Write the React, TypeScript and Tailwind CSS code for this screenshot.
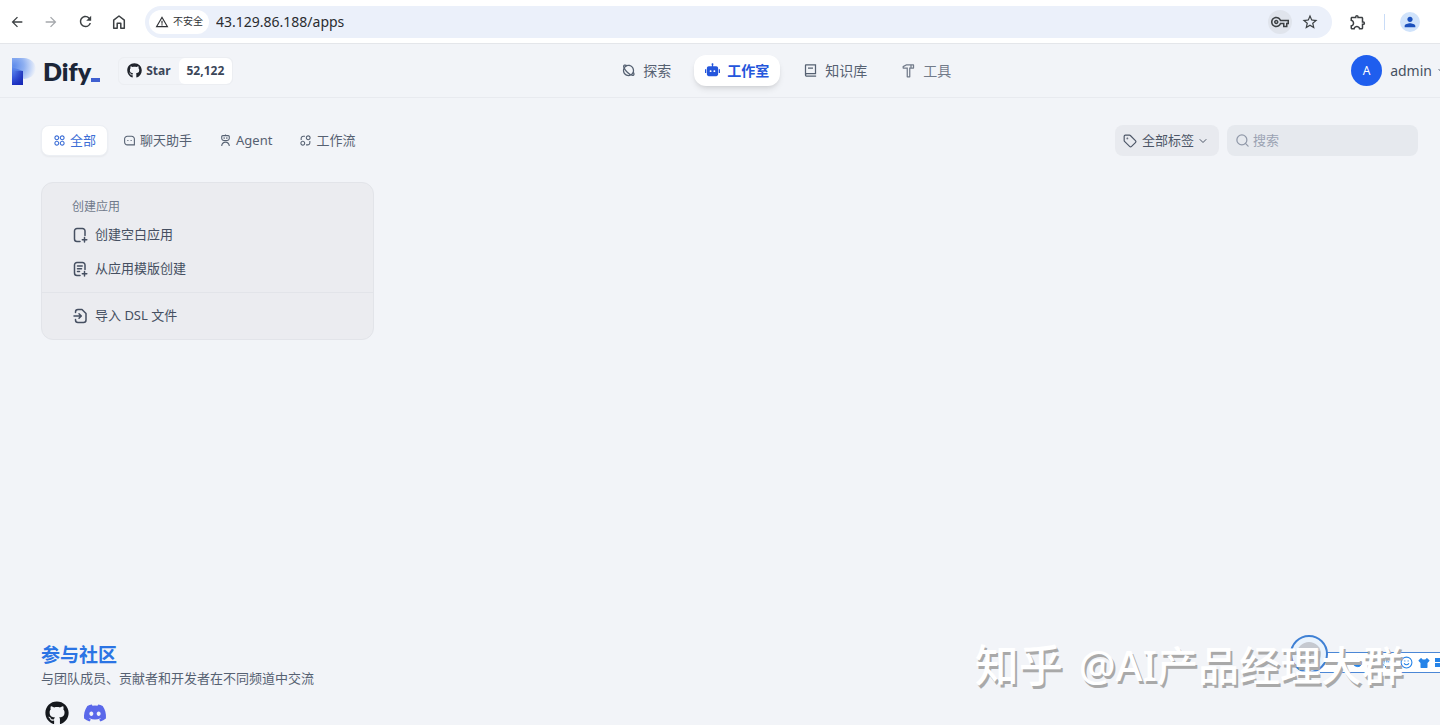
import { useState } from "react";
import type { ReactNode } from "react";
import {
  RiPlanetLine,
  RiRobot2Fill,
  RiBook2Line,
  RiHammerLine,
  RiApps2Line,
  RiMessage3Line,
  RiRobot3Line,
  RiExchange2Line,
  RiTShirtFill,
} from "react-icons/ri";
import {
  MdArrowBack,
  MdArrowForward,
  MdRefresh,
  MdWarningAmber,
  MdOutlineVpnKey,
  MdStarBorder,
  MdOutlineExtension,
  MdPerson,
} from "react-icons/md";
import { FaDiscord, FaGithub } from "react-icons/fa";
import { ChevronDown, Mic, Moon, Search, Smile, Tag } from "lucide-react";

const navItems = [
  { id: "explore", label: "探索", icon: RiPlanetLine, tone: "text-[#566172]" },
  { id: "studio", label: "工作室", icon: RiRobot2Fill, tone: "text-[#566172]" },
  { id: "datasets", label: "知识库", icon: RiBook2Line, tone: "text-[#566172]" },
  { id: "tools", label: "工具", icon: RiHammerLine, tone: "text-[#727b8a]" },
];

const tabs = [
  { id: "all", label: "全部", icon: RiApps2Line },
  { id: "chat", label: "聊天助手", icon: RiMessage3Line },
  { id: "agent", label: "Agent", icon: RiRobot3Line },
  { id: "workflow", label: "工作流", icon: RiExchange2Line },
];

function CardIcon({ children }: { children: ReactNode }) {
  return (
    <svg
      viewBox="0 0 16 16"
      className="size-4 shrink-0"
      fill="none"
      stroke="currentColor"
      strokeWidth="1.5"
      strokeLinecap="round"
      strokeLinejoin="round"
      aria-hidden="true"
    >
      {children}
    </svg>
  );
}

function HomeIcon() {
  return (
    <svg viewBox="0 0 16 16" className="size-4" fill="none" stroke="currentColor" strokeWidth="1.5" aria-hidden="true">
      <path d="M2.7 6.2 8 2l5.3 4.2v8H9.800V9.300H6.200v4.900H2.700z" strokeLinejoin="round" />
    </svg>
  );
}

function DifyLogo() {
  return (
    <a href="#apps" className="flex h-8 items-center gap-[7px]" aria-label="Dify">
      <svg viewBox="0 0 24 28" className="h-7 w-6" aria-hidden="true">
        <defs>
          <radialGradient id="bowl" gradientUnits="userSpaceOnUse" cx="2" cy="9" r="22">
            <stop offset="0" stopColor="#5f8ceb" />
            <stop offset="0.45" stopColor="#8fb0f1" />
            <stop offset="0.75" stopColor="#c2d4f7" />
            <stop offset="1" stopColor="#f0f3f9" />
          </radialGradient>
          <linearGradient id="stem" x1="0" y1="0" x2="0" y2="1">
            <stop offset="0" stopColor="#5f8ceb" />
            <stop offset="0.5" stopColor="#3f62df" />
            <stop offset="1" stopColor="#1c30c2" />
          </linearGradient>
          <linearGradient id="stemShade" x1="0" y1="0" x2="1" y2="0">
            <stop offset="0" stopColor="#1422ae" stopOpacity="0" />
            <stop offset="1" stopColor="#1422ae" stopOpacity="0.7" />
          </linearGradient>
        </defs>
        <path d="M0 1h12a12 12 0 0 1 12 12 12 12 0 0 1-12 9L0 14z" fill="url(#bowl)" />
        <path d="M0 10l11 4v14H0z" fill="url(#stem)" />
        <path d="M2 14h9v14H2z" fill="url(#stemShade)" />
      </svg>
      <span className="flex items-end">
        <span className="font-['Lato','Noto_Sans',sans-serif] text-[25px] leading-8 font-extrabold text-[#1c2638]">
          Dify
        </span>
        <span className="mb-[5px] h-1 w-[9px] bg-[#3f5fd0]" />
      </span>
    </a>
  );
}

function BrowserBar() {
  const navButton = "flex h-8 w-[34px] items-center justify-center";

  return (
    <div className="flex h-11 shrink-0 items-center border-b border-[#e4e6ea] bg-white text-[#3c4043]">
      <button className={navButton} aria-label="Back">
        <MdArrowBack className="size-4" />
      </button>
      <button className={`${navButton} text-[#a5a8ac]`} aria-label="Forward">
        <MdArrowForward className="size-4" />
      </button>
      <button className={navButton} aria-label="Reload">
        <MdRefresh className="size-[17px]" />
      </button>
      <button className={navButton} aria-label="Home">
        <HomeIcon />
      </button>
      <div className="ml-[9px] flex h-8 flex-1 items-center rounded-full bg-[#ebf0fa] px-1">
        <button className="flex h-6 shrink-0 items-center gap-1 rounded-full bg-white px-1.5 text-[10px] text-[#303236]">
          <MdWarningAmber className="size-[14px]" />
          不安全
        </button>
        <input
          aria-label="Address"
          defaultValue="43.129.86.188/apps"
          className="ml-[7px] min-w-0 flex-1 bg-transparent text-[14px] text-[#2a2c30] outline-none"
        />
        <button className="flex size-6 items-center justify-center rounded-full bg-[#e0e4ec]" aria-label="Passwords">
          <MdOutlineVpnKey className="size-[18px]" />
        </button>
        <button className="mx-1.5 flex size-6 items-center justify-center" aria-label="Bookmark">
          <MdStarBorder className="size-[18px]" />
        </button>
      </div>
      <button className="flex h-8 w-[52px] items-center justify-center" aria-label="Extensions">
        <MdOutlineExtension className="size-[18px]" />
      </button>
      <span className="h-4 w-px bg-[#c9dcf7]" />
      <button className="mr-1.5 flex w-[49px] justify-center" aria-label="Profile">
        <span className="flex size-5 items-center justify-center rounded-full bg-[#d0e3fb] text-[#1b50bd]">
          <MdPerson className="size-4" />
        </span>
      </button>
    </div>
  );
}

function Header() {
  const [active, setActive] = useState("studio");

  return (
    <header className="flex h-[54px] shrink-0 items-center justify-between overflow-hidden border-b border-[#e8eaef] pl-3">
      <div className="flex items-center gap-[18px]">
        <DifyLogo />
        <a
          href="#github"
          className="flex h-7 items-center overflow-hidden rounded-md border border-[#eceef2] text-[12px] font-bold text-[#3b4658]"
        >
          <span className="flex h-full items-center gap-1 px-2">
            <FaGithub className="size-[15px] text-[#20242c]" />
            Star
          </span>
          <span className="flex h-full items-center rounded-md bg-white px-2">52,122</span>
        </a>
      </div>

      <nav className="mr-3 flex items-center gap-3">
        {navItems.map(({ id, label, icon: Icon, tone }) => (
          <button
            key={id}
            onClick={() => setActive(id)}
            className={`flex h-[31px] items-center gap-[7px] rounded-xl px-[11px] text-[14px] ${
              active === id ? "bg-white font-bold text-[#2456dc] shadow-md" : tone
            }`}
          >
            <Icon className="size-[15px]" />
            {label}
          </button>
        ))}
      </nav>

      <button className="-mr-2 flex items-center gap-1 text-[14px] text-[#465061]">
        <span className="mr-1 flex size-[31px] items-center justify-center rounded-full bg-[#1f5eee] text-[12px] text-white">
          A
        </span>
        admin
        <ChevronDown className="size-3" />
      </button>
    </header>
  );
}

function Toolbar() {
  const [active, setActive] = useState("all");

  return (
    <div className="flex items-center justify-between pt-[27px] pb-[26px]">
      <div className="flex items-center gap-[3px]">
        {tabs.map(({ id, label, icon: Icon }) => (
          <button
            key={id}
            onClick={() => setActive(id)}
            className={`flex h-[31px] items-center gap-1 rounded-lg border px-[11px] text-[13px] ${
              active === id
                ? "border-[#eceff4] bg-white text-[#3c6ed6] shadow-xs"
                : "border-transparent text-[#566172]"
            }`}
          >
            <Icon className="size-[13px]" />
            {label}
          </button>
        ))}
      </div>

      <div className="flex items-center gap-2 text-[13px]">
        <label className="relative flex h-[31px] items-center rounded-lg bg-[#e8eaef] text-[#4c5667]">
          <Tag className="pointer-events-none absolute left-2 size-[14px]" />
          <select aria-label="标签" className="h-full appearance-none bg-transparent pr-6 pl-[27px] outline-none">
            <option>全部标签</option>
          </select>
          <ChevronDown className="pointer-events-none absolute right-2.5 size-3" />
        </label>
        <label className="flex h-[31px] w-[191px] items-center gap-[3px] rounded-lg bg-[#e6e9ee] px-2 text-[#9199a9]">
          <Search className="size-[15px] shrink-0" />
          <input
            type="text"
            aria-label="搜索"
            placeholder="搜索"
            className="min-w-0 flex-1 bg-transparent outline-none placeholder:text-[#9ba3b3]"
          />
        </label>
      </div>
    </div>
  );
}

function CreateCard() {
  const row = "flex w-full items-center gap-[7px] pl-[30px] text-left";

  return (
    <section className="rounded-xl border border-[#e2e4e9] bg-[#ebecf0] text-[13px] text-[#454f61]">
      <div className="pt-[14px] pb-[6px]">
        <h2 className="pl-[30px] text-[12px] leading-5 text-[#707a8b]">创建应用</h2>
        <button className={`${row} h-[35px]`}>
          <CardIcon>
            <path d="M13 8.500V4a2.500 2.500 0 0 0-2.500-2.500H5A2.500 2.500 0 0 0 2.500 4v8A2.500 2.500 0 0 0 5 14.500h3M12.500 10.500v4.500M10.300 12.700h4.500" />
          </CardIcon>
          创建空白应用
        </button>
        <button className={`${row} h-[34px]`}>
          <CardIcon>
            <path d="M13 8.500V4a2.500 2.500 0 0 0-2.500-2.500H5A2.500 2.500 0 0 0 2.500 4v8A2.500 2.500 0 0 0 5 14.500h3M12.500 10.500v4.500M10.300 12.700h4.500M5.500 5h4.700M5.500 7.800h4M5.500 10.500h2" />
          </CardIcon>
          从应用模版创建
        </button>
      </div>
      <div className="border-t border-[#e2e4e9]">
        <button className={`${row} h-[46px]`}>
          <CardIcon>
            <path d="M3.500 4.500V4A2.500 2.500 0 0 1 6 1.500h4L14 5.500V12a2.500 2.500 0 0 1-2.500 2.500H6A2.500 2.500 0 0 1 3.500 12v-.500M2 8h7M7 5.700 9.300 8 7 10.300" />
          </CardIcon>
          导入 DSL 文件
        </button>
      </div>
    </section>
  );
}

function Footer() {
  return (
    <footer className="shrink-0 pl-[41px]">
      <h3 className="text-[19px] leading-6 font-bold text-[#2b74e4]">参与社区</h3>
      <p className="text-[13px] leading-[22px] text-[#566172]">与团队成员、贡献者和开发者在不同频道中交流</p>
      <div className="mt-3 flex gap-[14px] pl-1">
        <a href="#github" aria-label="GitHub">
          <FaGithub className="size-6 text-[#15181d]" />
        </a>
        <a href="#discord" aria-label="Discord">
          <FaDiscord className="size-6 text-[#5a68ea]" />
        </a>
      </div>
    </footer>
  );
}

// Input-method bar docked to the right edge, with its round handle
function ImeBar() {
  return (
    <div className="absolute right-0 bottom-[52px] flex h-[21px] w-[120px] items-center justify-end gap-[5px] border-y border-[#4b87d6] bg-white text-[#2583e8]">
      <span className="absolute -top-[18px] -left-[30px] flex size-[38px] items-center justify-center rounded-full border-2 border-[#3f80d4] bg-[#eaf3fc]">
        <span className="size-6 rounded-full bg-[#c5c9d0]" />
      </span>
      <Moon className="mr-3 size-[11px] fill-current" />
      <Mic className="mr-1 size-[11px]" />
      <Smile className="size-[13px]" strokeWidth={2} />
      <RiTShirtFill className="size-3" />
      <span className="grid w-[5px] gap-px">
        <span className="h-1 bg-[#2583e8]" />
        <span className="h-1 bg-[#2583e8]" />
      </span>
    </div>
  );
}

function Watermark() {
  return (
    <div className="pointer-events-none absolute right-[37px] bottom-[30px] flex items-center gap-4 font-medium whitespace-nowrap text-white [text-shadow:2px_3px_0_#a9a9a9]">
      <span className="text-[44px] leading-[60px]">知乎</span>
      <span className="text-[41px] leading-[60px]">@AI产品经理大群</span>
    </div>
  );
}

export default function App() {
  return (
    <div className="relative flex h-screen flex-col overflow-hidden bg-[#f2f4f8] font-['Noto_Sans','Noto_Sans_CJK_SC',sans-serif]">
      <BrowserBar />
      <Header />
      <main className="min-h-0 flex-1 pr-[22px] pl-[41px]">
        <Toolbar />
        <div className="grid grid-cols-4 gap-[15px]">
          <CreateCard />
        </div>
      </main>
      <Footer />
      <ImeBar />
      <Watermark />
    </div>
  );
}
